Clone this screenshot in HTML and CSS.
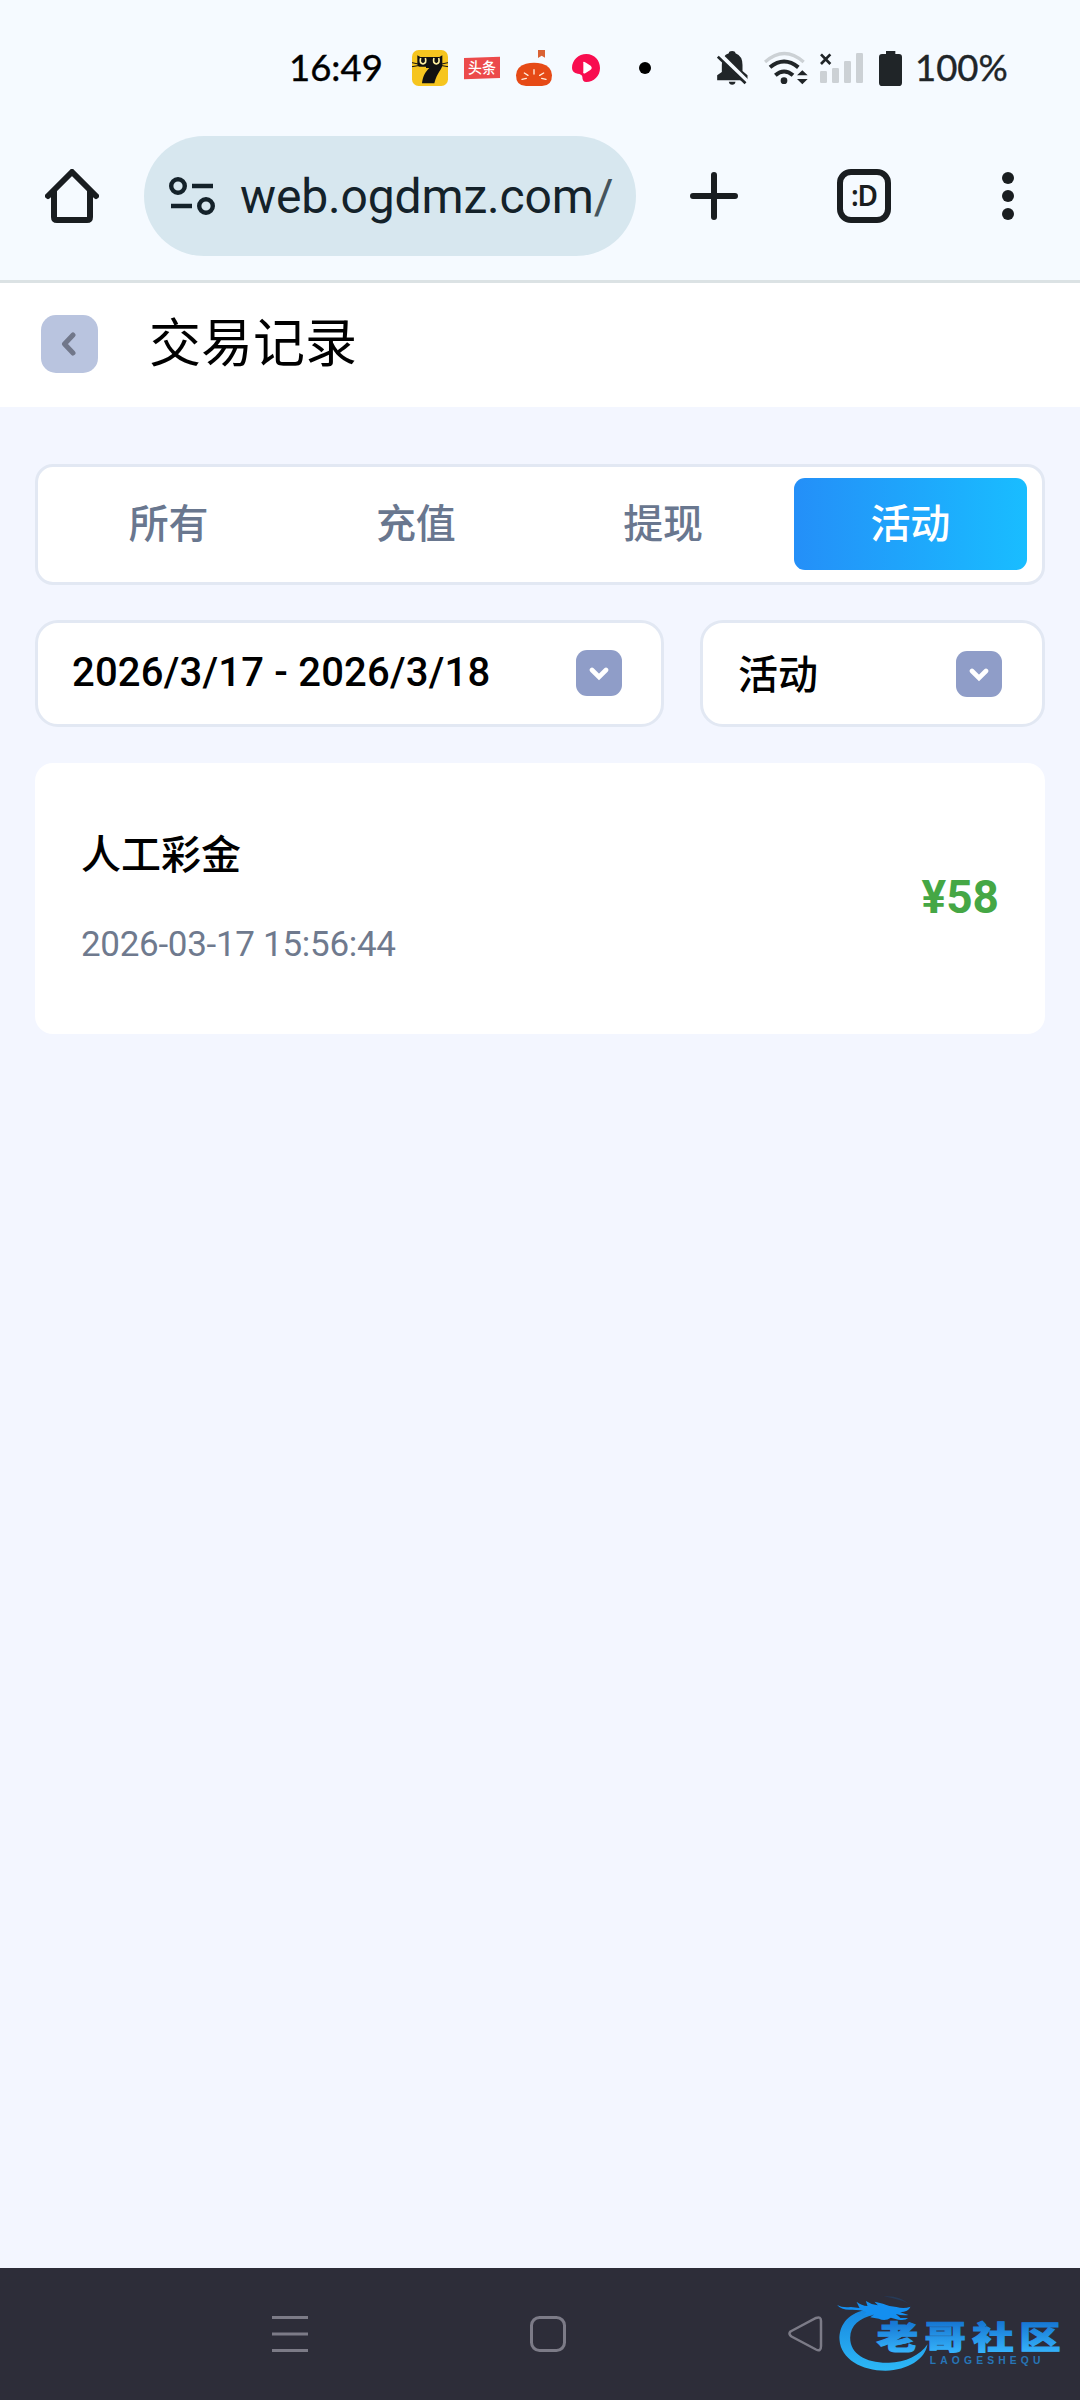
FILE: index.html
```html
<!DOCTYPE html>
<html lang="zh-CN">
	<head>
		<meta charset="UTF-8">
		<title>交易记录</title>
		<link rel="stylesheet" href="styles.css">
	</head>
	<body>
		<div class="status">
			<span class="time">16:49</span>
			<svg class="app cat" viewBox="0 0 108 108">
				<rect width="108" height="108" rx="20" fill="#f6c51f"/>
				<path d="M16 16L25 21H82L91 16V45C91 58 75 66 67 100H30C32 78 42 63 52 54H42V50H23Q16 50 16 38Z" fill="#111"/>
				<path d="M0 38L24 43M0 50L24 46M108 38L84 43M108 50L84 46" stroke="#111" stroke-width="3"/>
				<path d="M26 24Q21 40 33 42Q45 40 40 24M66 24Q61 40 73 42Q85 40 80 24" fill="none" stroke="#fff0a0" stroke-width="5"/>
			</svg>
			<svg class="app news" viewBox="0 0 108 108">
				<path d="M0 24L108 20V84L0 88Z" fill="#ec4a4b"/>
				<text x="12" y="70" font-size="44" textLength="84" lengthAdjust="spacingAndGlyphs" fill="#fff">头条</text>
			</svg>
			<svg class="app pumpkin" viewBox="0 0 108 108">
				<path d="M66 0H87V23L77 17L66 24Z" fill="#d96234"/>
				<path d="M30 41Q54 36 78 41Q108 50 108 76Q108 108 78 108H30Q0 108 0 76Q0 50 30 41Z" fill="#e64a16"/>
				<path d="M18 88L31 85M25 69L36 76M54 59V72M83 69L71 76M90 88L77 85" stroke="#fff0df" stroke-width="4" stroke-linecap="round"/>
			</svg>
			<svg class="app play" viewBox="0 0 84 84">
				<path d="M0 42C0 18 20 0 43 0C68 0 84 20 84 42C84 67 65 84 43 84C35 84 31 78 31 68Q29 60 17 59C6 57 0 51 0 42Z" fill="#f80d4f"/>
				<path d="M34 28Q31 20 42 26L56 35Q63 42 55 48L41 57Q31 62 34 51Z" fill="#fff"/>
			</svg>
			<i class="dot"></i>
			<svg class="bell" viewBox="0 0 92 102">
				<path d="M0 88V73L14 63V42Q14 14 35 7Q35 0 45 0Q54 0 55 7Q76 15 76 42V60L91 73V88Z" fill="#202528"/>
				<path d="M35 92H55Q54 101 45 101Q36 101 35 92Z" fill="#202528"/>
				<path d="M7 12L93 97" stroke="#f5faff" stroke-width="17"/>
				<path d="M2 17L85 97" stroke="#202528" stroke-width="8"/>
			</svg>
			<svg class="wifi" viewBox="0 0 132 102" fill="none">
				<path d="M3 33Q61 -18 119 33" stroke="#ccd1d5" stroke-width="10"/>
				<path d="M18 49Q60 14 103 49" stroke="#202528" stroke-width="12"/>
				<path d="M34 73Q60 50 87 73" stroke="#202528" stroke-width="12"/>
				<path d="M99 73L115 58L131 73ZM99 84L115 100L131 84Z" fill="#202528"/>
				<circle cx="60" cy="89" r="10" fill="#202528"/>
			</svg>
			<svg class="signal" viewBox="0 0 129 90">
				<path d="M3 4L31 33M31 4L3 33" stroke="#202528" stroke-width="8"/>
				<g fill="#ccd1d5">
					<rect y="54" width="21" height="36" rx="4"/>
					<rect x="36" y="45" width="21" height="45" rx="4"/>
					<rect x="72" y="24" width="21" height="66" rx="4"/>
					<rect x="108" width="21" height="90" rx="4"/>
				</g>
			</svg>
			<svg class="battery" viewBox="0 0 69 105">
				<path d="M21 0H49V9H60Q69 9 69 18V95Q69 105 59 105H10Q0 105 0 95V18Q0 9 9 9H21Z" fill="#202528"/>
			</svg>
			<span class="percent">100%</span>
		</div>

		<div class="toolbar">
			<svg class="home" viewBox="0 0 54 54" fill="none" stroke="#191d20" stroke-width="6">
				<path d="M3 27L27 3L51 27" stroke-linecap="round" stroke-linejoin="round"/>
				<path d="M9 22V48Q9 51 12 51H42Q45 51 45 48V22"/>
			</svg>
			<div class="address">
				<svg class="tune" viewBox="0 0 46 38" fill="none" stroke="#14222a" stroke-width="4.4">
					<circle cx="9" cy="9" r="6.8"/>
					<path d="M23 9H44M2 29H23"/>
					<circle cx="37" cy="29" r="6.8"/>
				</svg>
				<span>web.ogdmz.com<em>/</em></span>
			</div>
			<svg class="plus" viewBox="0 0 48 48" stroke="#191d20" stroke-width="6" stroke-linecap="round">
				<path d="M24 3V45M3 24H45"/>
			</svg>
			<div class="tabcount">:D</div>
			<svg class="more" viewBox="0 0 12 48" fill="#191d20">
				<circle cx="6" cy="6" r="6"/>
				<circle cx="6" cy="24" r="6"/>
				<circle cx="6" cy="42" r="6"/>
			</svg>
		</div>

		<div class="header">
			<span class="back">
				<svg viewBox="0 0 15 24"><path d="M12 3L3.5 12L12 21" fill="none" stroke="#71778a" stroke-width="5" stroke-linecap="round" stroke-linejoin="round"/></svg>
			</span>
			<h1>交易记录</h1>
		</div>

		<section class="main">
			<ul class="tabs">
				<li>所有</li>
				<li>充值</li>
				<li>提现</li>
				<li class="active">活动</li>
			</ul>
			<div class="filters">
				<div class="select date">
					<span>2026/3/17 - 2026/3/18</span>
					<i class="arrow"><svg viewBox="0 0 20 14"><path d="M3 3L10 10L17 3" fill="none" stroke="#fff" stroke-width="4.6" stroke-linecap="round"/></svg></i>
				</div>
				<div class="select type">
					<span>活动</span>
					<i class="arrow"><svg viewBox="0 0 20 14"><path d="M3 3L10 10L17 3" fill="none" stroke="#fff" stroke-width="4.6" stroke-linecap="round"/></svg></i>
				</div>
			</div>
			<div class="record">
				<div class="info">
					<p class="name">人工彩金</p>
					<p class="when">2026-03-17 15:56:44</p>
				</div>
				<b class="money">¥58</b>
			</div>
		</section>

		<div class="navbar">
			<svg class="recent" viewBox="0 0 36 36" stroke="#7c7b87" stroke-width="3">
				<path d="M0 1.5H36M0 18H36M0 34.5H36"/>
			</svg>
			<svg class="desk" viewBox="0 0 36 36">
				<rect x="1.5" y="1.5" width="33" height="33" rx="8" fill="none" stroke="#7c7b87" stroke-width="3"/>
			</svg>
			<svg class="prev" viewBox="0 0 35 36">
				<path d="M2.5 15.5L28 2Q33 0 33 5V30Q33 36 28 33.5L3.5 20.5Q0 18 2.5 15.5Z" fill="none" stroke="#7c7b87" stroke-width="2.5"/>
			</svg>
			<svg class="logo" viewBox="230 135 680 240">
				<defs>
					<linearGradient id="ring" x1="0" y1="150" x2="0" y2="365" gradientUnits="userSpaceOnUse">
						<stop offset="0" stop-color="#137edc"/>
						<stop offset="1" stop-color="#2db8f6"/>
					</linearGradient>
					<linearGradient id="word" x1="0" y1="-80" x2="0" y2="8" gradientUnits="userSpaceOnUse">
						<stop offset="0" stop-color="#1778d4"/>
						<stop offset="1" stop-color="#35b2fa"/>
					</linearGradient>
				</defs>
				<!-- dragon -->
				<path d="M318 183C260 194 238 235 240 272C244 330 307 365 378 365C445 364 497 331 504 286C481 320 434 343 382 341C318 341 272 314 272 266C273 229 300 207 343 198Z" fill="url(#ring)"/>
				<path d="M233 168Q248 177 274 174L300 177L291 158Q306 170 324 171L319 156Q335 167 355 169L345 158Q373 164 390 171L411 174Q433 181 453 173Q447 188 422 190L447 198Q426 200 409 195L423 207L446 207Q437 216 416 212L394 206Q377 218 358 209L332 205L343 197L312 198L321 189Q304 182 278 182Q245 184 233 168Z" fill="#148ff0"/>
				<path d="M372 142Q418 138 448 164Q419 150 372 142Z" fill="#263b59"/>
				<g fill="url(#word)" stroke="url(#word)" stroke-width="3" class="wordmark">
					<text transform="translate(352 301) scale(1.32 1)">老</text>
					<text transform="translate(495 301) scale(1.32 1)">哥</text>
					<text transform="translate(638 301) scale(1.32 1)">社</text>
					<text transform="translate(779 301) scale(1.32 1)">区</text>
				</g>
				<text class="latin" x="511" y="344" textLength="332">LAOGESHEQU</text>
			</svg>
		</div>
	</body>
</html>
```
FILE: styles.css
```css
*{
	margin:0;
	padding:0;
	box-sizing:border-box;
}
body{
	width:1080px;
	height:2400px;
	display:flex;
	flex-direction:column;
	background:#f3f6ff;
	font-family:Roboto,"Noto Sans CJK SC",sans-serif;
	color:#000;
	overflow:hidden;
}
svg{
	display:block;
	flex:none;
}
ul{
	list-style:none;
}

/* status bar */
.status{
	height:136px;
	padding-left:289px;
	display:flex;
	align-items:center;
	background:#f5faff;
	font-family:Lato,sans-serif;
	font-size:36.5px;
	line-height:44px;
}
.time{
	width:123px;
	padding-bottom:2px;
	-webkit-text-stroke:.4px #000;
}
.app{
	width:36px;
	height:36px;
	margin-right:16px;
}
.news text{
	font-family:"Noto Sans CJK SC",sans-serif;
	font-weight:500;
}
.play{
	width:28px;
	height:28px;
	margin:0 39px 0 4px;
}
.dot{
	width:12px;
	height:12px;
	border-radius:50%;
	background:#000;
	margin-right:66px;
}
.bell{
	width:31px;
	height:34px;
	margin-right:16px;
}
.wifi{
	width:44px;
	height:34px;
	margin-right:12px;
}
.signal{
	width:43px;
	height:30px;
	margin-right:16px;
}
.battery{
	width:23px;
	height:35px;
	margin-right:13px;
}
.percent{
	padding-bottom:2px;
	color:#202528;
	-webkit-text-stroke:.4px #202528;
}

/* browser toolbar */
.toolbar{
	height:147px;
	padding:0 66px 24px 45px;
	display:flex;
	align-items:center;
	background:#f5faff;
	border-bottom:3px solid #dbe2e4;
}
.home{
	width:54px;
	height:54px;
}
.address{
	width:492px;
	height:120px;
	margin:0 54px 0 45px;
	padding-left:25px;
	display:flex;
	align-items:center;
	gap:25px;
	border-radius:60px;
	background:#d7e7ef;
	color:#14222a;
	font-size:48px;
	letter-spacing:-.15px;
	white-space:nowrap;
}
.address em{
	font-style:normal;
	color:#45545c;
}
.tune{
	width:46px;
	height:38px;
}
.plus{
	width:48px;
	height:48px;
}
.tabcount{
	width:54px;
	height:54px;
	margin:0 111px 0 99px;
	border:6px solid #191d20;
	border-radius:14px;
	text-align:center;
	font:600 28px/41px "Noto Sans",sans-serif;
	letter-spacing:-1px;
	color:#191d20;
}
.more{
	width:12px;
	height:48px;
}

/* page header */
.header{
	height:124px;
	padding:0 41px 3px;
	display:flex;
	align-items:center;
	background:#fff;
}
.back{
	width:57px;
	height:58px;
	margin-right:51px;
	padding-left:20px;
	display:flex;
	align-items:center;
	border-radius:15px;
	background:#b9c4df;
}
.back svg{
	width:15px;
	height:24px;
}
h1{
	padding-top:3px;
	font-size:52px;
	font-weight:400;
	line-height:76px;
}

.main{
	flex:1;
	padding:57px 35px 0;
}
.tabs{
	height:121px;
	padding:11px 15px 12px 14px;
	display:grid;
	grid-template-columns:repeat(4,1fr);
	gap:14px;
	border:3px solid #e2e8f3;
	border-radius:18px;
	background:#fff;
}
.tabs li{
	padding-top:2px;
	text-align:center;
	font-size:40px;
	font-weight:500;
	line-height:90px;
	color:#69778f;
	border-radius:11px;
}
.tabs .active{
	color:#fff;
	background:linear-gradient(90deg,#248ff8,#19bdff);
}
.filters{
	display:flex;
	gap:36px;
	margin:35px 0 36px;
}
.select{
	height:107px;
	padding:0 40px 0 35px;
	display:flex;
	align-items:center;
	justify-content:space-between;
	border:3px solid #e2e8f3;
	border-radius:23px;
	background:#fff;
	font-size:40px;
	font-weight:500;
}
.date{
	width:629px;
	padding:0 39px 2px 34px;
	letter-spacing:.2px;
}
.type{
	flex:1;
}
.type span{
	padding-bottom:4px;
}
.arrow{
	width:46px;
	height:46px;
	display:flex;
	align-items:center;
	justify-content:center;
	border-radius:11px;
	background:#8f9dc8;
}
.arrow svg{
	width:20px;
	height:14px;
	margin-top:3px;
}
.record{
	height:271px;
	padding:0 46px;
	display:flex;
	align-items:center;
	justify-content:space-between;
	border-radius:18px;
	background:#fff;
}
.name{
	font-size:40px;
	font-weight:500;
	line-height:60px;
	margin-bottom:32px;
}
.when{
	font-size:35px;
	line-height:54px;
	letter-spacing:-.3px;
	color:#6f7a8e;
}
.money{
	padding-bottom:4px;
	font-size:46px;
	color:#45a745;
}

/* system navigation */
.navbar{
	height:132px;
	padding:0 0 0 272px;
	display:flex;
	align-items:center;
	background:#2d2d39;
}
.recent,.desk{
	width:36px;
	height:36px;
	margin-right:222px;
}
.prev{
	width:35px;
	height:36px;
	margin-right:13px;
}
.logo{
	width:227px;
	height:80px;
}
.wordmark{
	font:900 94px "Noto Sans CJK SC",sans-serif;
}
.latin{
	font:700 31px "Liberation Sans",sans-serif;
	fill:#2775b6;
}
```
